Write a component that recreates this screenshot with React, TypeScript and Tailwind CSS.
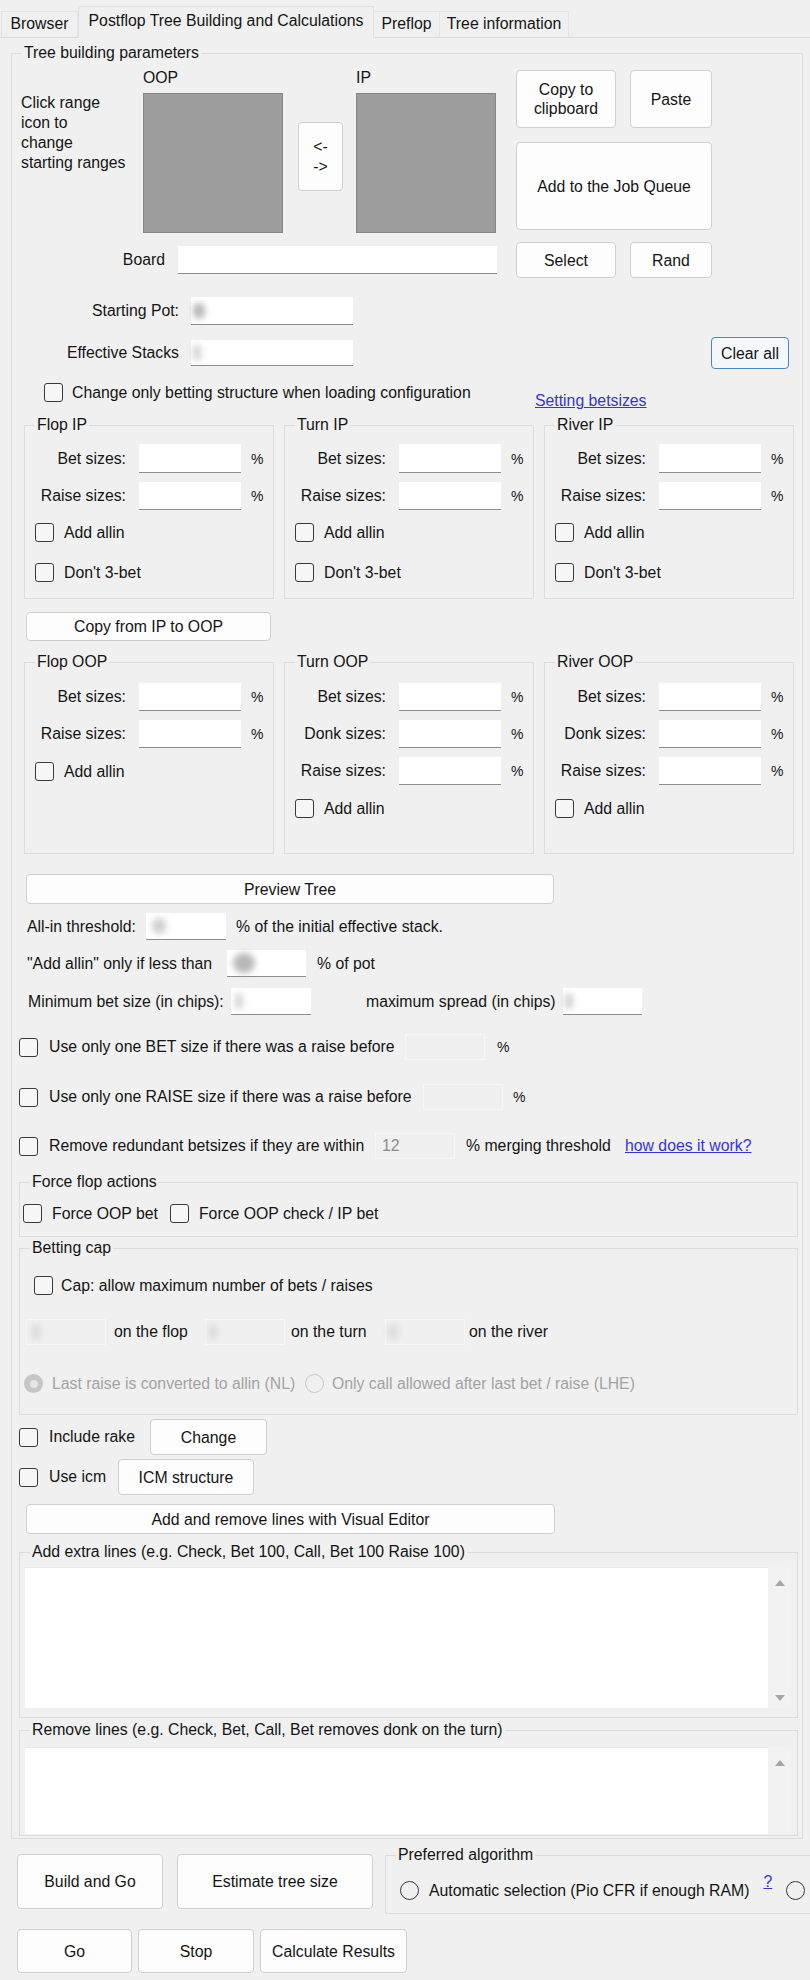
import React from "react";

type Kids = { className?: string; children?: React.ReactNode };

function Btn({ className = "", children }: Kids) {
  return (
    <button
      type="button"
      className={`flex shrink-0 items-center justify-center rounded-[4px] border border-[#d0d0d0] bg-[#fdfdfd] text-center leading-[19px] ${className}`}
    >
      {children}
    </button>
  );
}

function Blob({ className = "" }: { className?: string }) {
  return <span className={`absolute top-1/2 h-[16px] -translate-y-1/2 rounded-full bg-[#b8b8b8] blur-[3px] ${className}`} />;
}

function TextBox({ className = "", children, disabled }: Kids & { disabled?: boolean }) {
  const look = disabled ? "border border-[#f7f7f7]" : "border-b border-[#8c8c8c] bg-white";
  return <div className={`relative flex shrink-0 items-center ${look} ${className}`}>{children}</div>;
}

function Box() {
  return <span className="block h-[19px] w-[19px] shrink-0 rounded-[3px] border border-[#3a3a3a] bg-[#f6f6f6]" />;
}

function Check({ label, className = "", gap = "ml-[10px]" }: { label: string; className?: string; gap?: string }) {
  return (
    <div className={`flex items-center ${className}`}>
      <Box />
      <span className={`whitespace-nowrap ${gap}`}>{label}</span>
    </div>
  );
}

function Radio({ checked, disabled }: { checked?: boolean; disabled?: boolean }) {
  if (checked) {
    return (
      <span className="flex h-[19px] w-[19px] shrink-0 items-center justify-center rounded-full bg-[#c6c6c6]">
        <span className="h-[8px] w-[8px] rounded-full bg-[#e6e6e6]" />
      </span>
    );
  }
  return <span className={`block h-[19px] w-[19px] shrink-0 rounded-full border ${disabled ? "border-[#c8c8c8]" : "border-[#3a3a3a]"}`} />;
}

function Group({ title, className = "", children }: Kids & { title: string }) {
  return (
    <fieldset className={`shrink-0 border border-[#dcdcdc] ${className}`}>
      <legend className="ml-[10px] px-[2px] leading-[16px]">{title}</legend>
      {children}
    </fieldset>
  );
}

function SizeRow({ label, className = "" }: { label: string; className?: string }) {
  return (
    <div className={`flex items-center ${className}`}>
      <span className="w-[101px] whitespace-nowrap text-right">{label}</span>
      <TextBox className="ml-[13px] h-full w-[102px]" />
      <span className="ml-[10px] text-[14px]">%</span>
    </div>
  );
}

function IpGroup({ title }: { title: string }) {
  return (
    <Group title={title} className="h-[182px] w-[250px]">
      <div className="pt-[11px]">
        <SizeRow label="Bet sizes:" className="h-[29px]" />
        <SizeRow label="Raise sizes:" className="mt-[9px] h-[28px]" />
        <Check label="Add allin" className="ml-[10px] mt-[13px]" />
        <Check label="Don't 3-bet" className="ml-[10px] mt-[21px]" />
      </div>
    </Group>
  );
}

function OopGroup({ title, donk }: { title: string; donk?: boolean }) {
  return (
    <Group title={title} className="h-[200px] w-[250px]">
      <div className="pt-[13px]">
        <SizeRow label="Bet sizes:" className="h-[28px]" />
        {donk && <SizeRow label="Donk sizes:" className="mt-[9px] h-[28px]" />}
        <SizeRow label="Raise sizes:" className="mt-[9px] h-[28px]" />
        <Check label="Add allin" className="ml-[10px] mt-[14px]" />
      </div>
    </Group>
  );
}

function Arrow({ up }: { up?: boolean }) {
  return (
    <svg width="12" height="7" viewBox="0 0 12 7" className="mx-auto">
      <path d={up ? "M1 7 L6 1 L11 7 Z" : "M1 0 L6 6 L11 0 Z"} fill="#a6a6a6" />
    </svg>
  );
}

function TextArea({ className = "", down }: { className?: string; down?: boolean }) {
  return (
    <div className={`ml-[5px] flex w-[766px] ${className}`}>
      <div className="flex-1 border-t border-[#e8e8e8] bg-white" />
      <div className="flex w-[23px] flex-col justify-between bg-[#f2f2f2] pb-[6px] pt-[12px]">
        <Arrow up />
        {down && <Arrow />}
      </div>
    </div>
  );
}

function Tabs() {
  return (
    <div className="flex h-[38px] items-end border-b border-[#dadada] pl-[1px]">
      <div className="flex h-[26px] w-[77px] items-center justify-center border border-b-0 border-[#e4e4e4] pb-[2px]">Browser</div>
      <div className="relative -mb-px flex h-[32px] w-[296px] items-center justify-center border border-b-0 border-[#e0e0e0] bg-[#f0f0f0] pb-[4px]">
        Postflop Tree Building and Calculations
      </div>
      <div className="flex h-[26px] w-[66px] items-center justify-center border-b-0 border-r border-t border-[#e4e4e4] pb-[2px]">Preflop</div>
      <div className="flex h-[26px] w-[129px] items-center justify-center border-b-0 border-r border-t border-[#e4e4e4] pb-[2px]">Tree information</div>
    </div>
  );
}

export default function App() {
  return (
    <div className="relative h-[1980px] w-[810px] overflow-hidden bg-[#f0f0f0] font-['Liberation_Sans',Arial,sans-serif] text-[15.8px] leading-[18px] text-[#141414]">
      <Tabs />

      <Group title="Tree building parameters" className="ml-[11px] mt-[7px] h-[1794px] w-[792px]">
        {/* ranges and job buttons */}
        <div className="mt-[9px] flex">
          <div className="flex flex-col">
            <div className="flex items-start">
              <div className="ml-[9px] w-[122px] pt-[23px] leading-[20px]">
                Click range
                <br />
                icon to
                <br />
                change
                <br />
                starting ranges
              </div>
              <div className="flex flex-col">
                <div className="leading-[16px]">OOP</div>
                <div className="mt-[7px] h-[140px] w-[140px] border border-[#878787] bg-[#9d9d9d]" />
              </div>
              <Btn className="ml-[15px] mt-[52px] h-[69px] w-[45px] leading-[20px]">
                &lt;-
                <br />
                -&gt;
              </Btn>
              <div className="ml-[13px] flex flex-col">
                <div className="leading-[16px]">IP</div>
                <div className="mt-[7px] h-[140px] w-[140px] border border-[#878787] bg-[#9d9d9d]" />
              </div>
            </div>
            <div className="mt-[13px] flex items-center">
              <span className="w-[153px] text-right">Board</span>
              <TextBox className="ml-[13px] h-[28px] w-[319px]" />
            </div>
          </div>
          <div className="ml-[19px] flex flex-col">
            <div className="flex gap-[14px]">
              <Btn className="h-[58px] w-[100px]">
                Copy to
                <br />
                clipboard
              </Btn>
              <Btn className="h-[58px] w-[82px]">Paste</Btn>
            </div>
            <Btn className="mt-[14px] h-[88px] w-[196px]">Add to the Job Queue</Btn>
            <div className="mt-[12px] flex gap-[14px]">
              <Btn className="h-[36px] w-[100px]">Select</Btn>
              <Btn className="h-[36px] w-[82px]">Rand</Btn>
            </div>
          </div>
        </div>

        <div className="mt-[19px] flex items-center">
          <span className="w-[167px] text-right">Starting Pot:</span>
          <TextBox className="ml-[12px] h-[28px] w-[162px]">
            <Blob className="left-[2px] w-[12px]" />
          </TextBox>
        </div>
        <div className="mt-[12px] flex h-[32px] items-center">
          <span className="w-[167px] text-right">Effective Stacks</span>
          <TextBox className="ml-[12px] h-[26px] w-[162px]">
            <Blob className="left-[2px] w-[8px] bg-[#d4d4d4]" />
          </TextBox>
          <button
            type="button"
            className="ml-auto mr-[13px] h-[32px] w-[78px] rounded-[4px] border border-[#4a86c5] bg-[#f4f8fc] leading-[19px]"
          >
            Clear all
          </button>
        </div>

        <div className="mt-[14px] flex h-[19px] pl-[32px]">
          <div className="w-[491px]">
            <Check label="Change only betting structure when loading configuration" gap="ml-[9px]" />
          </div>
          <span className="mt-[9px] whitespace-nowrap text-[#3535d2] underline">Setting betsizes</span>
        </div>

        <div className="mt-[15px] flex gap-[10px] pl-[12px]">
          <IpGroup title="Flop IP" />
          <IpGroup title="Turn IP" />
          <IpGroup title="River IP" />
        </div>

        <Btn className="ml-[14px] mt-[13px] h-[29px] w-[245px]">Copy from IP to OOP</Btn>

        <div className="mt-[13px] flex gap-[10px] pl-[12px]">
          <OopGroup title="Flop OOP" />
          <OopGroup title="Turn OOP" donk />
          <OopGroup title="River OOP" donk />
        </div>

        <Btn className="ml-[14px] mt-[20px] h-[30px] w-[528px]">Preview Tree</Btn>

        <div className="mt-[9px] flex h-[27px] items-center pl-[15px]">
          <span className="w-[119px] whitespace-nowrap">All-in threshold:</span>
          <TextBox className="h-full w-[80px]">
            <Blob className="left-[6px] w-[14px] bg-[#cfcfcf]" />
          </TextBox>
          <span className="ml-[10px]">% of the initial effective stack.</span>
        </div>
        <div className="mt-[10px] flex h-[27px] items-center pl-[15px]">
          <span className="w-[200px] whitespace-nowrap">"Add allin" only if less than</span>
          <TextBox className="h-full w-[79px]">
            <Blob className="left-[6px] h-[20px] w-[22px] bg-[#b0b0b0]" />
          </TextBox>
          <span className="ml-[11px]">% of pot</span>
        </div>
        <div className="mt-[11px] flex h-[27px] items-center pl-[16px]">
          <span className="w-[203px] whitespace-nowrap">Minimum bet size (in chips):</span>
          <TextBox className="h-full w-[80px]">
            <Blob className="left-[4px] w-[8px] bg-[#d6d6d6]" />
          </TextBox>
          <span className="w-[252px] whitespace-nowrap pl-[55px]">maximum spread (in chips)</span>
          <TextBox className="h-full w-[79px]">
            <Blob className="left-[2px] w-[8px] bg-[#d0d0d0]" />
          </TextBox>
        </div>

        <div className="mt-[19px] flex h-[26px] items-center pl-[7px]">
          <div className="w-[386px]">
            <Check label="Use only one BET size if there was a raise before" gap="ml-[11px]" />
          </div>
          <TextBox disabled className="h-full w-[80px]" />
          <span className="ml-[12px] text-[14px]">%</span>
        </div>
        <div className="mt-[24px] flex h-[26px] items-center pl-[7px]">
          <div className="w-[404px]">
            <Check label="Use only one RAISE size if there was a raise before" gap="ml-[11px]" />
          </div>
          <TextBox disabled className="h-full w-[80px]" />
          <span className="ml-[10px] text-[14px]">%</span>
        </div>
        <div className="mt-[23px] flex h-[26px] items-center pl-[7px]">
          <div className="w-[356px]">
            <Check label="Remove redundant betsizes if they are within" gap="ml-[11px]" />
          </div>
          <TextBox disabled className="h-full w-[80px] pl-[6px] text-[#8c8c8c]">
            12
          </TextBox>
          <span className="ml-[11px] w-[159px] whitespace-nowrap">% merging threshold</span>
          <span className="whitespace-nowrap text-[#3535d2] underline">how does it work?</span>
        </div>

        <Group title="Force flop actions" className="ml-[7px] mt-[15px] h-[63px] w-[779px]">
          <div className="flex items-center pt-[14px]">
            <Check label="Force OOP bet" className="ml-[3px]" />
            <Check label="Force OOP check / IP bet" className="ml-[12px]" />
          </div>
        </Group>

        <Group title="Betting cap" className="ml-[7px] mt-[3px] h-[175px] w-[779px]">
          <div className="pt-[20px]">
            <Check label="Cap: allow maximum number of bets / raises" className="ml-[14px]" gap="ml-[8px]" />
            <div className="mt-[24px] flex h-[26px] items-center pl-[6px]">
              <TextBox disabled className="h-full w-[80px]">
                <Blob className="left-[4px] w-[10px] bg-[#dcdcdc]" />
              </TextBox>
              <span className="ml-[8px] w-[91px] whitespace-nowrap">on the flop</span>
              <TextBox disabled className="h-full w-[80px]">
                <Blob className="left-[2px] w-[10px] bg-[#dcdcdc]" />
              </TextBox>
              <span className="ml-[6px] w-[94px] whitespace-nowrap">on the turn</span>
              <TextBox disabled className="h-full w-[80px]">
                <Blob className="left-[2px] w-[10px] bg-[#dcdcdc]" />
              </TextBox>
              <span className="ml-[4px]">on the river</span>
            </div>
            <div className="mt-[29px] flex h-[19px] items-center pl-[4px] text-[#a3a3a3]">
              <Radio checked disabled />
              <span className="ml-[9px] w-[244px] whitespace-nowrap">Last raise is converted to allin (NL)</span>
              <span className="ml-[9px]">
                <Radio disabled />
              </span>
              <span className="ml-[8px] whitespace-nowrap">Only call allowed after last bet / raise (LHE)</span>
            </div>
          </div>
        </Group>

        <div className="mt-[4px] flex h-[36px] items-center pl-[7px]">
          <Box />
          <span className="ml-[11px] w-[101px]">Include rake</span>
          <Btn className="h-[36px] w-[117px]">Change</Btn>
        </div>
        <div className="mt-[4px] flex h-[36px] items-center pl-[7px]">
          <Box />
          <span className="ml-[11px] w-[69px]">Use icm</span>
          <Btn className="h-[36px] w-[136px]">ICM structure</Btn>
        </div>

        <Btn className="ml-[14px] mt-[9px] h-[30px] w-[529px]">Add and remove lines with Visual Editor</Btn>

        <Group title="Add extra lines (e.g. Check, Bet 100, Call, Bet 100 Raise 100)" className="ml-[7px] mt-[10px] h-[174px] w-[779px]">
          <TextArea className="mt-[7px] h-[141px]" down />
        </Group>
        <Group title="Remove lines (e.g. Check, Bet, Call, Bet removes donk on the turn)" className="ml-[7px] mt-[4px] h-[114px] w-[779px]">
          <TextArea className="mt-[9px] h-[87px]" />
        </Group>
      </Group>

      <div className="mt-[8px] flex items-start">
        <Btn className="ml-[17px] mt-[7px] h-[55px] w-[146px]">Build and Go</Btn>
        <Btn className="ml-[14px] mt-[7px] h-[55px] w-[196px]">Estimate tree size</Btn>
        <Group title="Preferred algorithm" className="ml-[12px] h-[67px] w-[440px]">
          <div className="flex items-center pl-[14px] pt-[18px]">
            <Radio />
            <span className="ml-[10px] whitespace-nowrap">Automatic selection (Pio CFR if enough RAM)</span>
            <span className="relative -top-[9px] ml-[14px] text-[#3535d2] underline">?</span>
            <span className="ml-[14px]">
              <Radio />
            </span>
          </div>
        </Group>
      </div>
      <div className="mt-[15px] flex gap-[6px] pl-[17px]">
        <Btn className="h-[44px] w-[115px]">Go</Btn>
        <Btn className="h-[44px] w-[116px]">Stop</Btn>
        <Btn className="h-[44px] w-[147px]">Calculate Results</Btn>
      </div>
    </div>
  );
}
